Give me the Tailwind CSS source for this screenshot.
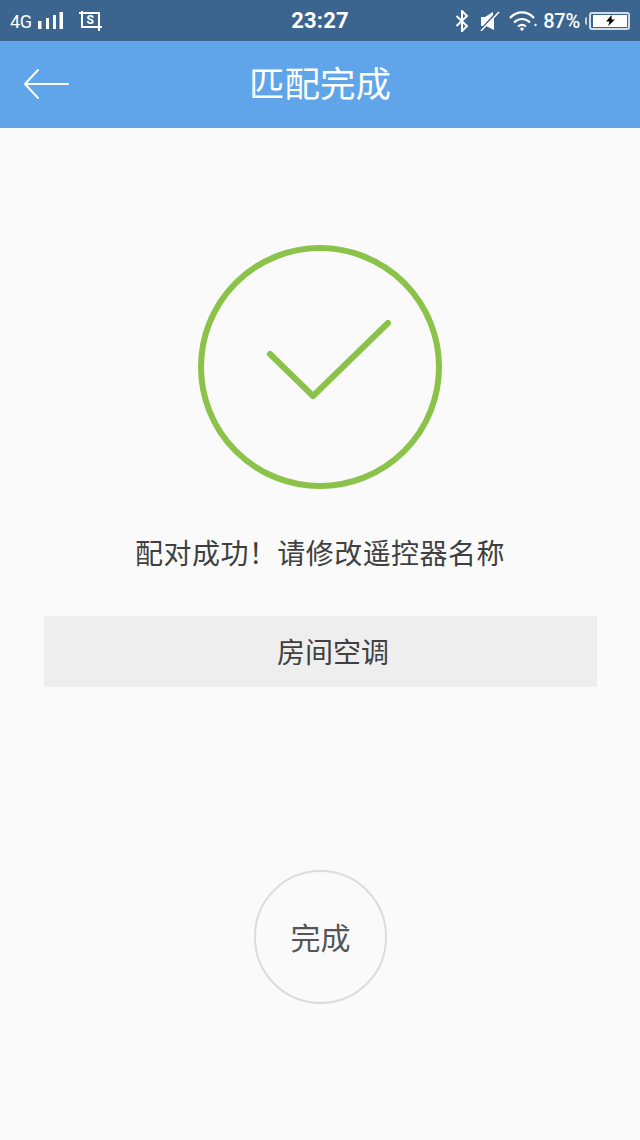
<!DOCTYPE html>
<html lang="zh">
<head>
<meta charset="UTF-8">
<meta name="viewport" content="width=device-width, initial-scale=1.0">
<title>匹配完成</title>
<script src="https://cdn.jsdelivr.net/npm/@tailwindcss/browser@4"></script>
</head>
<body class="bg-[#fafafa]">
<div class="w-[640px] h-[1140px] overflow-hidden flex flex-col font-['Roboto','Noto_Sans_CJK_SC',sans-serif]">
  <!-- status bar -->
  <div class="h-[41px] bg-[#3b658e] text-white flex items-center justify-between pl-[10px] pr-[10px]">
    <div class="flex-1 flex items-center">
      <span class="text-[18px] leading-none tracking-[-0.4px] mt-[2px]">4G</span>
      <svg class="ml-[6px]" width="25" height="20" viewBox="0 0 25 20" fill="#fff"><rect x="0" y="10" width="3.500" height="8"/><rect x="8" y="7" width="3" height="11"/><rect x="15" y="4" width="3" height="14"/><rect x="21.500" y="1" width="3.500" height="17"/></svg>
      <svg class="ml-[16px]" width="24" height="22" viewBox="0 0 24 22" fill="none" stroke="#fff" stroke-width="2"><path d="M3 1v16h20M0 3h20v18"/><text x="7.500" y="14" font-size="12" font-weight="700" fill="#fff" stroke="none" font-family="Roboto">S</text></svg>
    </div>
    <span class="text-[22px] font-bold leading-none tracking-[0.2px] mt-[1px]">23:27</span>
    <div class="flex-1 flex items-center justify-end">
      <svg width="14" height="22" viewBox="0 0 14 22" fill="none" stroke="#fff" stroke-width="2"><path d="M1.500 6l10.500 10-5 5V1l5 5L1.500 16"/></svg>
      <svg class="ml-[11px]" width="20" height="20" viewBox="0 0 20 20"><path d="M1 6h4l8-5v3L3 15H1z" fill="#fff"/><path d="M14 7v12l-8-4z" fill="#fff"/><path d="M1 20L19 1" stroke="#fff" stroke-width="1.500"/></svg>
      <svg class="ml-[9px]" width="28" height="20" viewBox="0 0 28 20" fill="none" stroke="#fff" stroke-width="2.200"><path d="M1 7c7-7.500 17-7.500 24 0M5 11.500c5-4.500 11-4.500 16 0M9 15.500c2.500-2 5.500-2 8 0"/><circle cx="13" cy="18" r="1.700" fill="#fff" stroke="none"/><circle cx="26.500" cy="14" r="1.200" fill="#fff" stroke="none"/></svg>
      <span class="ml-[6px] text-[20px] font-medium leading-none tracking-[-0.2px]">87%</span>
      <div class="ml-[5px] w-[2px] h-[8px] bg-white/70 rounded-l-sm"></div>
      <div class="ml-[2px] w-[41px] h-[18px] border-2 border-[#d5dde6] rounded-[3px] p-[1px] pl-[2px] flex">
        <div class="flex-1 bg-white flex items-center justify-center">
          <svg width="11" height="11" viewBox="0 0 10 10" fill="#000"><path d="M6 0L1 6h3l-1 4 6-6H6z"/></svg>
        </div>
      </div>
    </div>
  </div>

  <!-- header -->
  <div class="relative h-[87px] bg-[#60a5e9] flex items-center justify-center">
    <svg class="absolute left-[23px] top-[27px]" width="46" height="32" viewBox="0 0 46 32" fill="none" stroke="#fff" stroke-width="2" stroke-linecap="round" stroke-linejoin="round"><path d="M45 16H2M15 2L2 16l13 14"/></svg>
    <h1 class="text-[35.500px] text-white font-normal leading-none pt-[3px]">匹配完成</h1>
  </div>

  <!-- content -->
  <div class="flex-1 flex flex-col items-center">
    <svg class="mt-[117px]" width="244" height="244" viewBox="0 0 244 244" fill="none" stroke="#8bc34a"><circle cx="122" cy="122" r="119" stroke-width="6"/><path d="M72 109l43 42 75-73" stroke-width="6" stroke-linecap="round" stroke-linejoin="round"/></svg>
    <p class="mt-[46px] text-[28px] leading-[40px] text-[#404040] tracking-[0.45px]">配对成功！请修改遥控器名称</p>
    <div class="mt-[41px] ml-[1px] w-[553px] h-[71px] bg-[#eeeeee] flex items-center justify-center pl-[25px] pt-[4px] text-[28px] text-[#404040]">房间空调</div>
    <button class="mt-[183px] ml-[1px] w-[133px] h-[134px] rounded-full border-2 border-[#dcdce0] flex items-center justify-center pt-[2px] text-[30px] text-[#555555]">完成</button>
  </div>
</div>
</body>
</html>
